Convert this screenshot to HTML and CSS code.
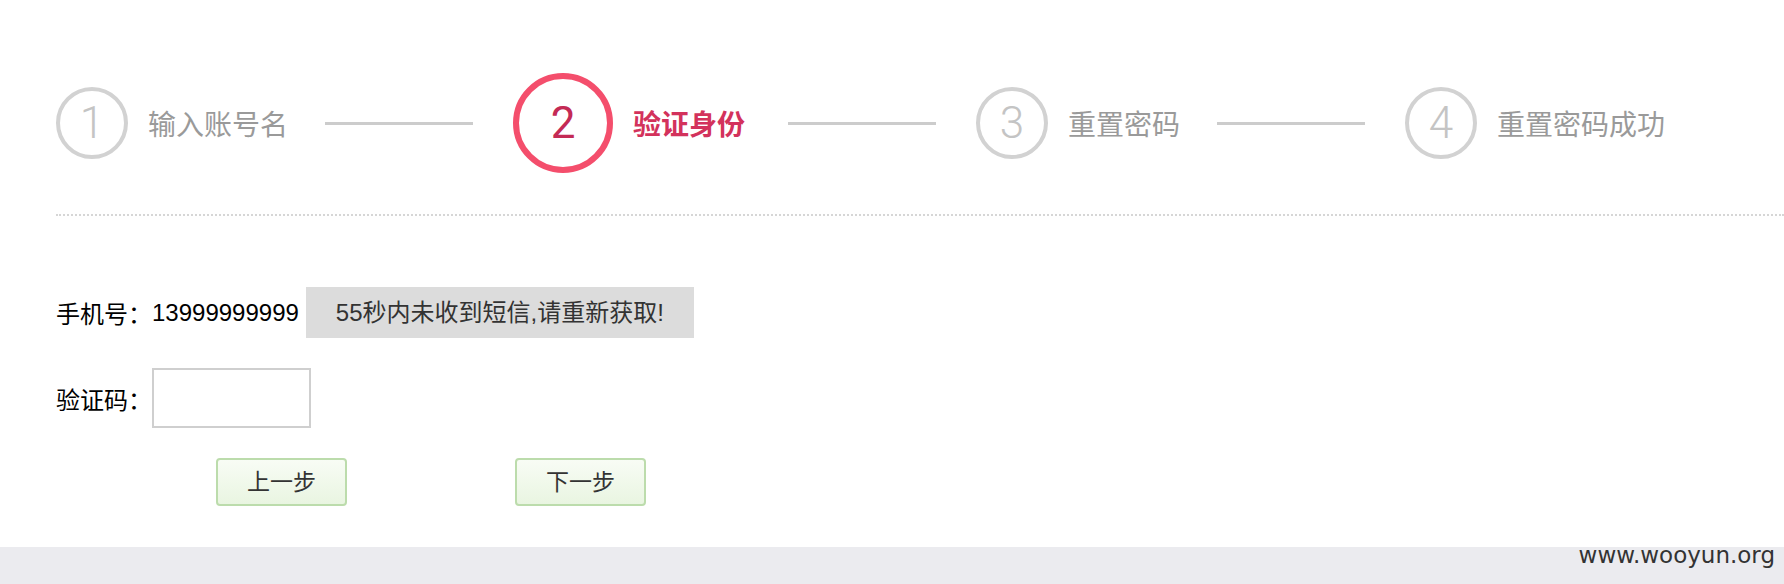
FILE: index.html
```html
<!DOCTYPE html>
<html lang="zh-CN">
<head>
<meta charset="utf-8">
<title>找回密码 - 验证身份</title>
<link rel="stylesheet" href="styles.css">
</head>
<body>
<div class="page">
  <div class="steps">
    <div class="step"><span class="num">1</span><span class="label">输入账号名</span></div>
    <span class="line"></span>
    <div class="step active"><span class="num">2</span><span class="label">验证身份</span></div>
    <span class="line"></span>
    <div class="step"><span class="num">3</span><span class="label">重置密码</span></div>
    <span class="line"></span>
    <div class="step"><span class="num">4</span><span class="label">重置密码成功</span></div>
  </div>
  <div class="divider"></div>
  <form class="form">
    <div class="row phone-row">
      <span class="field-label">手机号：</span><span class="phone">13999999999</span><span class="resend">55秒内未收到短信,请重新获取!</span>
    </div>
    <div class="row code-row">
      <label class="field-label" for="code">验证码：</label><input id="code" class="code" type="text">
    </div>
    <div class="actions">
      <button type="button" class="btn">上一步</button>
      <button type="button" class="btn next">下一步</button>
    </div>
  </form>
</div>
<footer class="footer"><span class="mark">www.wooyun.org</span></footer>
</body>
</html>
```

FILE: styles.css
```css
html, body {
  margin: 0;
  padding: 0;
  background: #fff;
}
body {
  font-family: "Liberation Sans", "Noto Sans CJK SC", sans-serif;
  color: #000;
}
.page {
  height: 547px;
  box-sizing: border-box;
  padding: 73px 0 0 56px;
}
.steps {
  display: flex;
  align-items: center;
  height: 100px;
}
.step {
  display: flex;
  align-items: center;
}
.num {
  width: 72px;
  height: 72px;
  box-sizing: border-box;
  border: 4px solid #d2d2d2;
  border-radius: 50%;
  display: flex;
  align-items: center;
  justify-content: center;
  font-family: Roboto, "Liberation Sans", sans-serif;
  font-weight: 300;
  font-size: 44px;
  color: #c4c4c4;
}
.step.active .num {
  width: 100px;
  height: 100px;
  border: 6px solid #f44e6c;
  color: #c42a55;
  font-weight: 400;
}
.label {
  margin-left: 20px;
  font-family: "Noto Sans CJK SC", sans-serif;
  font-size: 28px;
  color: #9a9a9a;
}
.step.active .label {
  margin-left: 20px;
  margin-right: 6px;
  color: #d3325c;
  font-weight: 700;
}
.line {
  width: 148px;
  height: 3px;
  background: #cccccc;
  margin: 0 40px 0 37px;
}
.divider {
  margin-top: 41px;
  border-top: 2px dotted #d6d6d6;
}
.form {
  margin: 71px 0 0;
}
.row {
  display: flex;
  align-items: center;
  font-size: 24px;
}
.phone-row {
  height: 51px;
}
.field-label {
  font-family: "Noto Sans CJK SC", sans-serif;
  color: #000;
}
.phone {
  color: #000;
}
.resend {
  margin-left: 7px;
  height: 51px;
  line-height: 51px;
  padding: 0 30px;
  background: #dcdcdc;
  color: #333;
}
.code-row {
  margin-top: 30px;
}
.code {
  width: 159px;
  height: 60px;
  box-sizing: border-box;
  margin: 0;
  padding: 0 6px;
  border: 2px solid #cfcfcf;
  font-size: 22px;
  outline: none;
}
.actions {
  margin-top: 30px;
  padding-left: 160px;
  display: flex;
}
.btn {
  width: 131px;
  height: 48px;
  box-sizing: border-box;
  border: 2px solid #bcdcac;
  border-radius: 4px;
  background: linear-gradient(#f8fcf5, #e9f5e1);
  font-family: "Noto Sans CJK SC", sans-serif;
  font-size: 23px;
  line-height: 1;
  color: #333;
  padding: 0 0 4px;
}
.btn.next {
  margin-left: 168px;
}
.footer {
  height: 37px;
  background: #ebebef;
  display: flex;
  justify-content: flex-end;
  align-items: flex-start;
  padding-right: 9px;
}
.mark {
  font-family: "DejaVu Sans", sans-serif;
  font-size: 23px;
  line-height: 22px;
  margin-top: -3px;
  color: #333;
}
```
